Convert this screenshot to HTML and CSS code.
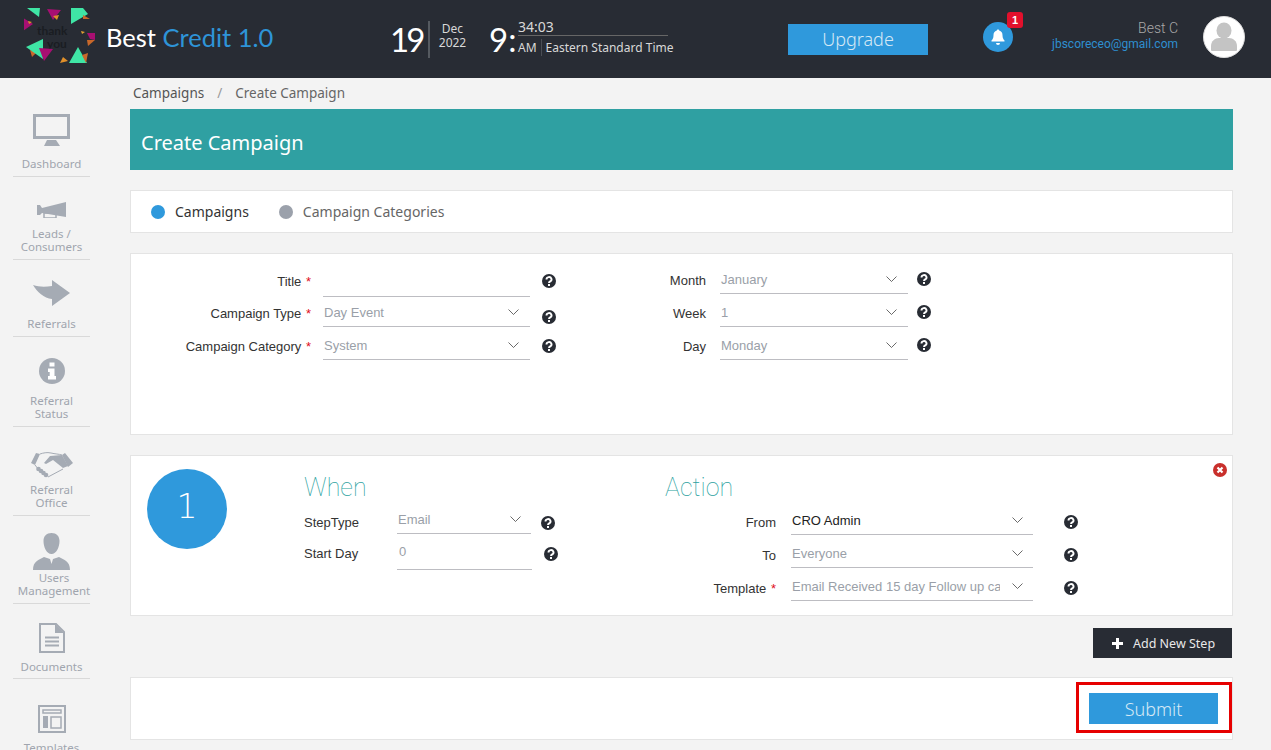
FILE: index.html
```html
<!DOCTYPE html>
<html lang="en">
<head>
<meta charset="utf-8">
<title>Create Campaign</title>
<link rel="stylesheet" href="styles.css">
</head>
<body>
<svg class="defs" width="0" height="0">
  <symbol id="help" viewBox="0 0 14 14"><circle cx="7" cy="7" r="7" fill="#282c34"/><path d="M4.500 5.400a2.500 2.300 0 1 1 3.700 2c-.8.5-1.200.8-1.200 1.600" fill="none" stroke="#fff" stroke-width="1.900"/><rect x="6" y="10" width="2" height="2" fill="#fff"/></symbol>
  <symbol id="chev" viewBox="0 0 11 6"><path d="M.5.5 5.500 5.500 10.500.5" fill="none" stroke="#444" stroke-width=".8"/></symbol>
</svg>
<header class="topbar">
  <svg class="logo" viewBox="0 0 72 56" width="72" height="56">
    <g transform="translate(-24 -8)">
      <text x="37" y="35" class="logo-text">thank</text>
      <text x="47" y="48" class="logo-text">you</text>
      <polygon points="27,8 40,8 39,17" fill="#3fe5a5"/>
      <polygon points="47,9 61,10 53,20" fill="#a80f72"/>
      <polygon points="53,16 59,15 57,20" fill="#e0902a"/>
      <polygon points="71,8 83,8 88,14 71,24" fill="#3fe5a5"/>
      <polygon points="83,15 90,19 83,19" fill="#c9682a"/>
      <polygon points="23,18 33,24 23,31" fill="#a80f72"/>
      <polygon points="28,21 32,22 29,24" fill="#e0902a"/>
      <polygon points="87,33 95,33 95,40 90,39" fill="#a80f72"/>
      <polygon points="87,40 95,40 88,46" fill="#c9682a"/>
      <polygon points="81,31 85,32 82,34" fill="#e0a030"/>
      <polygon points="30,50 37,52 32,57" fill="#c9682a"/>
      <polygon points="26,47 43,39 43,59" fill="#3fe5a5"/>
      <polygon points="39,48 53,49 44,61" fill="#a80f72"/>
      <polygon points="69,63 78,47 87,63" fill="#3fe5a5"/>
      <polygon points="60,63 63,57 68,61" fill="#e0902a"/>
      <polygon points="82,55 88,53 86,63" fill="#c9682a"/>
    </g>
  </svg>
  <div class="brand">Best <span class="brand-accent">Credit 1.0</span></div>
  <div class="date-day">19</div>
  <div class="date-month"><span>Dec</span><span>2022</span></div>
  <div class="time-hour">9:</div>
  <div class="time-detail">
    <div class="time-min">34:03</div>
    <div class="time-zone"><span class="time-ampm">AM</span><span>Eastern Standard Time</span></div>
  </div>
  <button class="upgrade">Upgrade</button>
  <div class="bell">
    <svg viewBox="0 0 30 30" width="30" height="30"><circle cx="15" cy="15" r="15" fill="#2f99dc"/><path d="M15 7.500c.8 0 1.200.5 1.200 1.100 2.300.6 3.300 2.400 3.300 4.700 0 3 1 4.200 2 5.200v1H8.500v-1c1-1 2-2.200 2-5.200 0-2.300 1-4.100 3.300-4.700 0-.6.400-1.100 1.200-1.100zM13 21h4a2 2 0 0 1-4 0z" fill="#fff"/></svg>
    <span class="badge">1</span>
  </div>
  <div class="user">
    <div class="user-name">Best C</div>
    <div class="user-mail">jbscoreceo@gmail.com</div>
  </div>
  <svg class="avatar" viewBox="0 0 42 42" width="42" height="42"><circle cx="21" cy="21" r="20.500" fill="#fff" stroke="#ddd"/><ellipse cx="21" cy="14.500" rx="7.500" ry="8" fill="#c4c4c4"/><path d="M8 34v-4c0-5 4-8 8-8h10c4 0 8 3 8 8v4c0 1-1 1-2 1H10c-1 0-2 0-2-1z" fill="#c4c4c4"/></svg>
</header>
<div class="layout">
  <nav class="sidebar">
    <a class="nav-item nav-dash">
      <svg viewBox="0 0 38 33" width="38" height="33"><rect x="1.500" y="1.500" width="34" height="22" fill="none" stroke="#a5abb4" stroke-width="3"/><polygon points="14,26 23,26 27,32 11,32" fill="#a5abb4"/></svg>
      <span>Dashboard</span>
    </a>
    <a class="nav-item nav-leads">
      <svg viewBox="0 0 29 16" width="29" height="16"><polygon points="0,3 3,3 5,6 29,0 29,15 5,11 3,13 0,13" fill="#a5abb4"/><rect x="7" y="11" width="12" height="5" fill="none" stroke="#a5abb4" stroke-width="1.500"/></svg>
      <span>Leads /<br>Consumers</span>
    </a>
    <a class="nav-item nav-ref">
      <svg viewBox="0 0 37 26" width="37" height="26"><path d="M0 5c6 2 12 2 19 1V0l18 13-18 13v-7C11 18 4 12 0 5z" fill="#a5abb4"/></svg>
      <span>Referrals</span>
    </a>
    <a class="nav-item nav-status">
      <svg viewBox="0 0 26 26" width="26" height="26"><circle cx="13" cy="13" r="13" fill="#a5abb4"/><rect x="10.500" y="4.500" width="5" height="4" fill="#fff"/><path d="M9 10.500h6.500V18H17v3.500H9V18h1.700v-4H9z" fill="#fff"/></svg>
      <span>Referral<br>Status</span>
    </a>
    <a class="nav-item nav-office">
      <svg viewBox="0 0 42 26" width="42" height="26"><path d="M0 11 5 1l4 1-5 11zM34 1l8 10-5 4-6-12z" fill="#a5abb4"/><path d="M13 11l6-7 12-1 6 11-5 2-10-8-7 4z" fill="#a5abb4"/><path d="M9 2c3-1 7-2 11-1s8 1 11 2M17 25l15-8M4 13l4 5" fill="none" stroke="#a5abb4"/><g fill="#a5abb4"><circle cx="7.500" cy="17" r="2.300"/><circle cx="10" cy="19" r="2.300"/><circle cx="12.500" cy="21" r="2.300"/><circle cx="15" cy="23" r="2.300"/></g></svg>
      <span>Referral<br>Office</span>
    </a>
    <a class="nav-item nav-users">
      <svg viewBox="0 0 37 37" width="37" height="37"><path d="M18.500 0c5 0 8 3 8 8 0 6-3 13-8 13s-8-7-8-13c0-5 3-8 8-8zM11 24l6 2 1.500 5 1.500-5 6-2c5 3 11 4 11 13H0c0-9 6-10 11-13z" fill="#a5abb4"/></svg>
      <span>Users<br>Management</span>
    </a>
    <a class="nav-item nav-docs">
      <svg viewBox="0 0 26 30" width="26" height="30"><path d="M1 1h16l8 8v20H1z" fill="none" stroke="#a5abb4" stroke-width="2"/><path d="M16 1v9h9" fill="#a5abb4"/><path d="M6 14.500h14M6 18.500h14M6 22.500h14" stroke="#a5abb4" stroke-width="2"/></svg>
      <span>Documents</span>
    </a>
    <a class="nav-item nav-tmpl">
      <svg viewBox="0 0 28 28" width="28" height="28"><rect x="1" y="1" width="26" height="26" fill="none" stroke="#a5abb4" stroke-width="2"/><rect x="5" y="5" width="18" height="3" fill="none" stroke="#a5abb4" stroke-width="1.500"/><rect x="5" y="11" width="5" height="12" fill="#a5abb4"/><rect x="13" y="12" width="10" height="11" fill="none" stroke="#a5abb4" stroke-width="1.500"/></svg>
      <span>Templates</span>
    </a>
  </nav>
  <main class="content">
    <div class="crumbs"><span class="crumb-first">Campaigns</span><span class="crumb-sep">/</span><span>Create Campaign</span></div>
    <h1 class="page-title">Create Campaign</h1>
    <div class="card tabs">
      <span class="dot dot-on"></span><span class="tab tab-on">Campaigns</span>
      <span class="dot dot-off"></span><span class="tab">Campaign Categories</span>
    </div>
    <section class="card form-card">
      <div class="col col-left">
        <div class="row row-33">
          <label class="lbl lbl-left lbl-up">Title <b>*</b></label>
          <div class="field field-left"></div>
          <svg class="help help-15"><use href="#help"/></svg>
        </div>
        <div class="row row-30">
          <label class="lbl lbl-left">Campaign Type <b>*</b></label>
          <div class="field field-left">Day Event<svg class="chev"><use href="#chev"/></svg></div>
          <svg class="help help-9"><use href="#help"/></svg>
        </div>
        <div class="row row-33">
          <label class="lbl lbl-left">Campaign Category <b>*</b></label>
          <div class="field field-left">System<svg class="chev"><use href="#chev"/></svg></div>
          <svg class="help help-13"><use href="#help"/></svg>
        </div>
      </div>
      <div class="col col-right">
        <div class="row row-33">
          <label class="lbl lbl-right">Month</label>
          <div class="field field-right">January<svg class="chev"><use href="#chev"/></svg></div>
          <svg class="help help-14"><use href="#help"/></svg>
        </div>
        <div class="row row-33">
          <label class="lbl lbl-right">Week</label>
          <div class="field field-right">1<svg class="chev"><use href="#chev"/></svg></div>
          <svg class="help help-14"><use href="#help"/></svg>
        </div>
        <div class="row row-33">
          <label class="lbl lbl-right">Day</label>
          <div class="field field-right">Monday<svg class="chev"><use href="#chev"/></svg></div>
          <svg class="help help-14"><use href="#help"/></svg>
        </div>
      </div>
    </section>
    <section class="card step-card">
      <div class="step-num">1</div>
      <div class="when">
        <h2 class="step-head">When</h2>
        <div class="row row-when1">
          <label class="lbl lbl-when">StepType</label>
          <div class="field field-when">Email<svg class="chev"><use href="#chev"/></svg></div>
          <svg class="help help-when1"><use href="#help"/></svg>
        </div>
        <div class="row row-when2">
          <label class="lbl lbl-when lbl-when2">Start Day</label>
          <div class="field field-when field-day">0</div>
          <svg class="help help-when2"><use href="#help"/></svg>
        </div>
      </div>
      <div class="action">
        <h2 class="step-head">Action</h2>
        <div class="row row-33 row-a1">
          <label class="lbl lbl-action">From</label>
          <div class="field field-action field-dark">CRO Admin<svg class="chev"><use href="#chev"/></svg></div>
          <svg class="help help-action"><use href="#help"/></svg>
        </div>
        <div class="row row-33">
          <label class="lbl lbl-action">To</label>
          <div class="field field-action">Everyone<svg class="chev"><use href="#chev"/></svg></div>
          <svg class="help help-action"><use href="#help"/></svg>
        </div>
        <div class="row row-33">
          <label class="lbl lbl-action">Template <b>*</b></label>
          <div class="field field-action"><span class="clip">Email Received 15 day Follow up campaign</span><svg class="chev"><use href="#chev"/></svg></div>
          <svg class="help help-action"><use href="#help"/></svg>
        </div>
      </div>
      <svg class="close" viewBox="0 0 14 14" width="14" height="14"><circle cx="7" cy="7" r="7" fill="#c9302c"/><path d="M4.500 4.500l5 5M9.500 4.500l-5 5" stroke="#fff" stroke-width="2.200"/></svg>
    </section>
    <div class="add-bar">
      <button class="add-step"><svg viewBox="0 0 11 11" width="11" height="11"><path d="M5.500 0v11M0 5.500h11" stroke="#fff" stroke-width="3"/></svg>Add New Step</button>
    </div>
    <div class="card submit-card">
      <div class="highlight"><button class="submit">Submit</button></div>
    </div>
  </main>
</div>
</body>
</html>
```

FILE: styles.css
```css
* { box-sizing: border-box; }
html, body { margin: 0; height: 100%; overflow: hidden; }
body { background: #f3f3f3; font-family: "Noto Sans", sans-serif; color: #333; }
.defs { position: absolute; }

.topbar { height: 78px; background: #282c34; display: flex; align-items: center; color: #fff; padding-left: 24px; }
.logo { flex: none; margin-top: -6px; }
.logo-text { font: 700 12px "Lato", sans-serif; fill: #1a1d22; }
.brand { font: 400 25.500px "Lato", sans-serif; margin-left: 10px; width: 284px; white-space: nowrap; margin-top: -4px; }
.brand-accent { color: #2e94d8; }
.date-day { font: 400 33px/36px "Lato", sans-serif; letter-spacing: -3px; width: 40px; padding-right: 9px; height: 37px; border-right: 2px solid #555a60; }
.date-month { display: flex; flex-direction: column; align-items: center; width: 45px; font-size: 12px; line-height: 14px; color: #d8d8d8; margin-top: -6px; }
.time-hour { font: 400 33px "Lato", sans-serif; margin-left: 14px; width: 29px; }
.time-detail { width: 150px; font-size: 12px; color: #d8d8d8; margin-top: -4px; }
.time-min { font-size: 14px; height: 17px; line-height: 16px; border-bottom: 1px solid #666; margin-bottom: 3px; }
.time-zone { display: flex; line-height: 17px; white-space: nowrap; }
.time-ampm { padding-right: 4px; margin-right: 4px; border-right: 1px solid #4a4e55; }
.upgrade { margin-left: 120px; width: 140px; height: 31px; background: #2f99dc; border: 0; color: #d5e8f5; font: 300 18px "Noto Sans", sans-serif; }
.bell { position: relative; margin-left: 55px; width: 30px; height: 30px; margin-top: -4px; }
.bell svg { display: block; }
.badge { position: absolute; left: 24px; top: -10px; width: 16px; height: 16px; background: #e2102c; border-radius: 3px; font: 700 11px/16px "Liberation Sans", sans-serif; text-align: center; color: #fff; }
.user { width: 165px; text-align: right; margin-top: -6px; }
.user-name { font: 300 14px/17px "Roboto", sans-serif; color: #a8a8a8; }
.user-mail { font: 12px/15px "Roboto", sans-serif; color: #2e8fd0; }
.avatar { margin-left: 25px; margin-top: -4px; flex: none; }

.layout { display: flex; }
.sidebar { width: 103px; flex: none; padding-left: 13px; }
.nav-item { display: flex; flex-direction: column; align-items: center; width: 77px; border-bottom: 1px solid #d9d9d9; padding-bottom: 6px; font-size: 11.500px; line-height: 13px; color: #a0a5ae; text-align: center; }
.nav-item svg { display: block; }
.nav-item span { white-space: nowrap; }
.nav-dash { padding-top: 36px; } .nav-dash svg { margin-bottom: 10px; }
.nav-leads { padding-top: 25px; } .nav-leads svg { margin-bottom: 9px; }
.nav-ref { padding-top: 20px; } .nav-ref svg { margin-bottom: 11px; }
.nav-status { padding-top: 21px; } .nav-status svg { margin-bottom: 10px; }
.nav-office { padding-top: 25px; } .nav-office svg { margin-bottom: 5px; }
.nav-users { padding-top: 17px; } .nav-users svg { margin-bottom: 1px; } .nav-users span { padding-left: 5px; }
.nav-docs { padding-top: 19px; padding-bottom: 5px; } .nav-docs svg { margin-bottom: 7px; }
.nav-tmpl { padding-top: 26px; border-bottom: 0; } .nav-tmpl svg { margin-bottom: 8px; }

.content { width: 1168px; flex: none; padding: 0 38px 0 27px; }
.crumbs { height: 31px; padding: 6px 0 0 3px; font-size: 13.500px; line-height: 18px; color: #666; }
.crumb-first { color: #555; }
.crumb-sep { margin: 0 13px; color: #999; }
.page-title { margin: 0 0 20px; height: 61px; background: #2fa0a2; color: #fff; font-size: 20px; font-weight: 400; line-height: 67px; padding-left: 11px; }
.card { background: #fff; border: 1px solid #e4e4e4; }
.tabs { height: 43px; margin-bottom: 20px; display: flex; align-items: center; padding-left: 20px; }
.dot { width: 14px; height: 14px; border-radius: 50%; flex: none; margin-right: 10px; }
.dot-on { background: #2f99dc; }
.dot-off { background: #9ba1ab; }
.tab { font-size: 14px; color: #666; }
.tab-on { color: #333; margin-right: 30px; }

.form-card { height: 182px; margin-bottom: 20px; display: flex; align-items: flex-start; }
.col { display: flex; flex-direction: column; }
.col-left { padding: 10px 0 0 0; width: 499px; }
.col-right { padding: 7px 0 0 0; }
.row { display: flex; align-items: flex-end; }
.row-33 { height: 33px; }
.row-30 { height: 30px; }
.lbl { font: 13px/26px "Liberation Sans", sans-serif; color: #333; white-space: nowrap; text-align: right; flex: none; }
.lbl b { color: #e01020; font-weight: 400; margin-left: 1px; }
.lbl-up { margin-bottom: 2px; }
.lbl-left { width: 180px; margin-right: 12px; }
.lbl-right { width: 76px; margin-right: 14px; }
.field { height: 26px; border-bottom: 1px solid #bdbdc2; font: 13px/24px "Liberation Sans", sans-serif; color: #9a9fa8; padding: 0 0 2px 1px; display: flex; align-items: center; justify-content: space-between; flex: none; }
.field-left { width: 207px; }
.field-right { width: 188px; }
.chev { width: 11px; height: 6px; margin-right: 11px; margin-top: -1px; flex: none; }
.help { width: 14px; height: 14px; flex: none; }
.help-15 { margin: 0 0 9px 12px; }
.help-9 { margin: 0 0 3px 12px; }
.help-13 { margin: 0 0 7px 12px; }
.help-14 { margin: 0 0 8px 9px; }

.step-card { position: relative; height: 161px; margin-bottom: 12px; display: flex; align-items: flex-start; }
.step-num { width: 80px; height: 80px; margin: 13px 0 0 16px; border-radius: 50%; background: #2f99dc; color: #fff; font: 200 33px/76px "DejaVu Sans", sans-serif; text-align: center; flex: none; }
.step-head { margin: 0; font: 100 25px/30px "Roboto", sans-serif; color: #2a9fa0; }
.when { margin: 17px 0 0 77px; width: 361px; flex: none; }
.row-when1 { height: 31px; }
.row-when2 { height: 36px; }
.lbl-when { width: 93px; text-align: left; margin-bottom: -2px; }
.lbl-when2 { margin-bottom: 3px; }
.field-when { width: 134px; }
.field-when .chev { margin-right: 10px; }
.field-day { width: 135px; height: 30px; padding-bottom: 6px; padding-left: 2px; }
.help-when1 { margin: 0 0 4px 10px; }
.help-when2 { margin: 0 0 9px 12px; }
.action { flex: none; margin-top: 17px; }
.action .row-a1 { height: 32px; }
.lbl-action { width: 111px; margin-right: 15px; margin-bottom: -1px; }
.field-action { width: 242px; }
.field-dark { color: #222; }
.field-action .chev { margin-right: 10px; }
.clip { width: 208px; overflow: hidden; white-space: nowrap; }
.help-action { margin: 0 0 6px 31px; }
.close { position: absolute; right: 5px; top: 7px; }

.add-bar { display: flex; justify-content: flex-end; height: 49px; padding-right: 1px; }
.add-step { width: 139px; height: 30px; background: #282c34; border: 0; color: #e8e8e8; font: 12.500px "Noto Sans", sans-serif; display: flex; align-items: center; padding: 0 0 0 19px; gap: 10px; }
.submit-card { height: 63px; display: flex; justify-content: flex-end; padding-top: 4px; }
.highlight { width: 156px; height: 51px; border: 3px solid #e60000; padding: 8px 11px 0 10px; }
.submit { width: 129px; height: 31px; background: #2f99dc; border: 0; color: #d5e8f5; font: 300 18px "Noto Sans", sans-serif; display: block; }
```
